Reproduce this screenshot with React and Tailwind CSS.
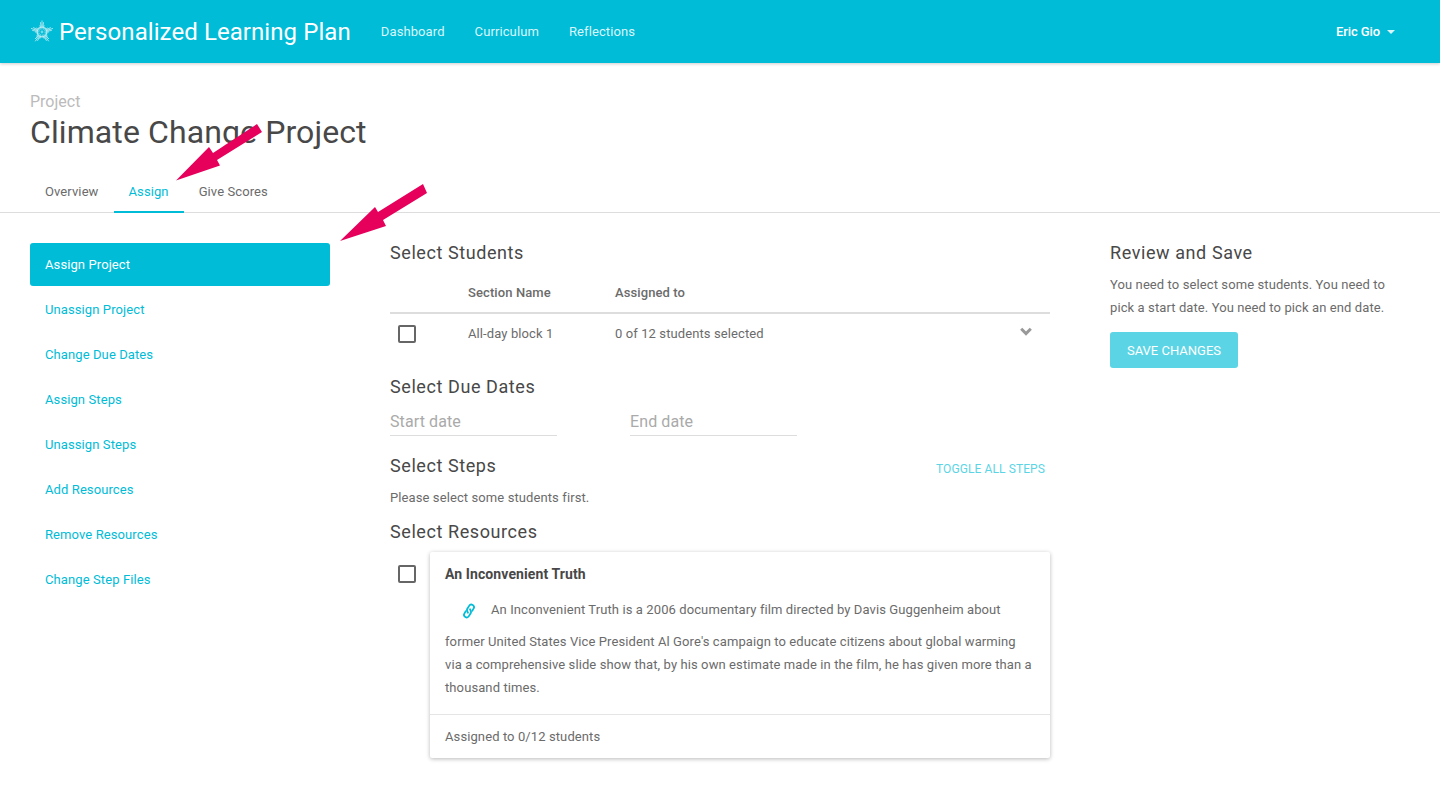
const sideLinks = [
  "Assign Project",
  "Unassign Project",
  "Change Due Dates",
  "Assign Steps",
  "Unassign Steps",
  "Add Resources",
  "Remove Resources",
  "Change Step Files",
];

function Logo() {
  // hatched five-armed star, ray length follows the arm angle
  const rays = Array.from({ length: 40 }, (_, i) => (i * 360) / 40);
  return (
    <svg viewBox="0 0 24 24" className="h-6 w-6">
      {rays.map((angle) => {
        const arm = Math.abs(Math.cos((angle * Math.PI * 5) / 360));
        return (
          <line
            key={angle}
            x1="12"
            y1={12 - (5.5 + arm * arm * arm * arm * 6)}
            x2="12"
            y2="8"
            stroke="#fff"
            strokeWidth="0.7"
            opacity="0.85"
            transform={`rotate(${angle} 12 12)`}
          />
        );
      })}
      <circle cx="12" cy="12" r="3.2" fill="none" stroke="#fff" strokeWidth="0.8" strokeDasharray="1.2 0.8" opacity="0.75" />
      <circle cx="12" cy="12" r="1.4" fill="#fff" opacity="0.45" />
    </svg>
  );
}

function ChainIcon() {
  return (
    <svg viewBox="0 0 12 16" className="h-[16px] w-[12px]" fill="none" stroke="#00bcd7" strokeWidth="1.8" strokeLinecap="round">
      <g transform="rotate(32 6 8)">
        <path d="M6 10 L4.8 9.2 A2.6 2.6 0 0 1 3.4 7 V3.6 A2.6 2.6 0 0 1 8.6 3.6 V6" />
        <path d="M6 6 L7.2 6.8 A2.6 2.6 0 0 1 8.6 9 V12.4 A2.6 2.6 0 0 1 3.4 12.4 V10" />
      </g>
    </svg>
  );
}

function ChevronIcon({ className }) {
  return (
    <svg viewBox="0 0 12 9" className={className} fill="none" stroke="#999" strokeWidth="3">
      <path d="M1.2 1.8 L6 6.6 L10.8 1.8" />
    </svg>
  );
}

function Checkbox() {
  return <div className="h-[18px] w-[18px] rounded-[2px] border-2 border-[#666]" />;
}

function Arrows() {
  return (
    <svg viewBox="0 0 1440 785" className="pointer-events-none absolute left-0 top-0 h-[785px] w-[1440px]">
      <polygon points="176,180.5 209,147 213,153 257,124 262,132 217,160 220,165.5" fill="#e6005c" />
      <polygon points="340,241 375,207 378,212 423,184 427,193 383,220 386,226" fill="#e6005c" />
    </svg>
  );
}

export default function App() {
  return (
    <div className="relative h-[785px] overflow-hidden bg-white font-['Roboto',sans-serif] text-[13px] tracking-[0.1px] text-[#6b6b6b]">
      <header className="flex h-[63px] items-center bg-[#00bcd7] pl-[30px] pr-[45px] text-white shadow-[0_1px_3px_rgba(0,0,0,0.2)]">
        <Logo />
        <span className="ml-[5px] text-[24px] tracking-[0.08px]">Personalized Learning Plan</span>
        <nav className="ml-[30px] flex gap-[30px] text-[#d9f5f9]">
          <span>Dashboard</span>
          <span>Curriculum</span>
          <span>Reflections</span>
        </nav>
        <div className="ml-auto flex items-center gap-[7px] font-medium tracking-[-0.1px]">
          Eric Gio
          <span className="mt-[1px] h-0 w-0 border-x-[4px] border-t-[4px] border-x-transparent border-t-[#d9f5f9]" />
        </div>
      </header>

      <div className="px-[30px] pt-[30px]">
        <p className="text-[16px] leading-[18px] tracking-normal text-[#bbb]">Project</p>
        <h1 className="mt-[3px] text-[32px] leading-[37px] text-[#484848]">Climate Change Project</h1>
      </div>

      <div className="mt-[20px] flex h-[42px] border-b border-[#ddd] pl-[30px]">
        <span className="flex h-[42px] items-center px-[15px]">Overview</span>
        <span className="flex h-[42px] items-center border-b-2 border-[#00bcd7] px-[15px] pt-[2px] text-[#00bcd7]">Assign</span>
        <span className="flex h-[42px] items-center px-[15px]">Give Scores</span>
      </div>

      <div className="flex gap-[60px] px-[30px] pt-[30px]">
        <aside className="flex w-[300px] shrink-0 flex-col gap-[2px]">
          {sideLinks.map((link, i) => (
            <a
              key={link}
              className={`flex h-[43px] items-center rounded-[3px] px-[15px] ${
                i === 0 ? "bg-[#00bcd7] text-white" : "text-[#00bcd7]"
              }`}
            >
              {link}
            </a>
          ))}
        </aside>

        <main className="w-[660px] shrink-0">
          <h2 className="text-[18px] leading-[20px] tracking-[0.58px] text-[#484848]">Select Students</h2>
          <div className="mt-[10px] flex h-[41px] items-center border-b-2 border-[#ddd] font-medium">
            <span className="ml-[78px] w-[147px]">Section Name</span>
            <span>Assigned to</span>
          </div>
          <div className="relative flex h-[40px] items-center">
            <div className="ml-[8px] w-[70px]">
              <Checkbox />
            </div>
            <span className="w-[147px]">All-day block 1</span>
            <span>0 of 12 students selected</span>
            <ChevronIcon className="absolute right-[18px] top-[13px] h-[9px] w-[12px]" />
          </div>

          <h2 className="mt-[23px] text-[18px] leading-[20px] tracking-[0.58px] text-[#484848]">Select Due Dates</h2>
          <div className="mt-[14px] flex gap-[73px]">
            <div className="h-[25px] w-[167px] border-b border-[#ddd] text-[16px] leading-[22px] text-[#aaa]">Start date</div>
            <div className="h-[25px] w-[167px] border-b border-[#ddd] text-[16px] leading-[22px] text-[#aaa]">End date</div>
          </div>

          <div className="mt-[18px] flex items-center justify-between pr-[5px]">
            <h2 className="text-[18px] leading-[20px] tracking-[0.58px] text-[#484848]">Select Steps</h2>
            <span className="mt-[6px] text-[12px] text-[#5bd5e5]">TOGGLE ALL STEPS</span>
          </div>
          <p className="mt-[11px] leading-[18px]">Please select some students first.</p>
          <h2 className="mt-[15px] text-[18px] leading-[20px] tracking-[0.58px] text-[#484848]">Select Resources</h2>

          <div className="mt-[10px] flex">
            <div className="w-[40px] pl-[8px] pt-[13px]">
              <Checkbox />
            </div>
            <div className="w-[620px] rounded-[2px] bg-white shadow-[0_1px_4px_rgba(0,0,0,0.28)]">
              <div className="px-[15px] pb-[15px] pt-[13px]">
                <h3 className="text-[14px] font-bold leading-[18px] text-[#484848]">An Inconvenient Truth</h3>
                <p className="mt-[8px] leading-[23px]">
                  <span className="ml-[18px] mr-[16px] inline-flex h-[39px] items-center align-middle">
                    <ChainIcon />
                  </span>
                  An Inconvenient Truth is a 2006 documentary film directed by Davis Guggenheim about former United States Vice President Al Gore's campaign to educate citizens about global warming via a comprehensive slide show that, by his own estimate made in the film, he has given more than a thousand times.
                </p>
              </div>
              <div className="flex h-[44px] items-center border-t border-[#e5e5e5] px-[15px]">Assigned to 0/12 students</div>
            </div>
          </div>
        </main>

        <aside className="w-[300px] shrink-0">
          <h2 className="text-[18px] leading-[20px] tracking-[0.58px] text-[#484848]">Review and Save</h2>
          <p className="mt-[10px] leading-[23px]">
            You need to select some students. You need to pick a start date. You need to pick an end date.
          </p>
          <button className="mt-[13px] flex h-[36px] w-[128px] items-center justify-center rounded-[3px] bg-[#5bd5e5] pt-[1px] tracking-normal text-white">
            SAVE CHANGES
          </button>
        </aside>
      </div>

      <Arrows />
    </div>
  );
}
